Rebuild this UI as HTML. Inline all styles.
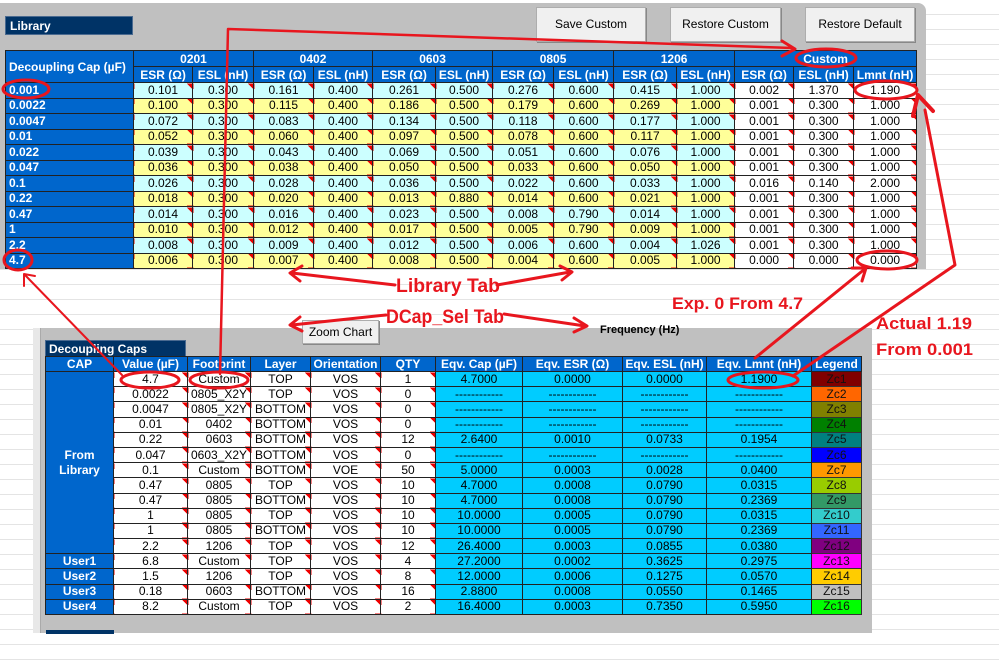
<!DOCTYPE html>
<html><head><meta charset="utf-8"><style>
*{margin:0;padding:0;box-sizing:border-box}
body{width:999px;height:661px;overflow:hidden;position:relative;background:#fff;font-family:"Liberation Sans",Arial,sans-serif;
background-image:repeating-linear-gradient(180deg,transparent 0,transparent 14px,#e4e4e4 14px,#e4e4e4 15px)}
.p{position:absolute}
.panel1{left:0;top:3px;width:926px;height:266px;background:#c0c0c0;border-top-right-radius:8px}
.panel2{left:40px;top:328px;width:832px;height:305px;background:#c0c0c0}
.lbl{background:#003366;color:#fff;font-weight:bold;font-size:12px;padding:2px 4px;border:1px solid #4a6a90}
.btn{background:#f0f0f0;border:1px solid #adadad;font-size:12px;text-align:center;line-height:33px;box-shadow:1px 1px 0 #888}
table{border-collapse:collapse;table-layout:fixed;font-size:12px}
td,th{border:1px solid #222;text-align:center;white-space:nowrap;overflow:hidden;padding:0}
th{background:#0066cc;color:#fff;font-weight:bold;font-size:12px}
.lib td{height:15.5px;line-height:13px}
.lib th{height:16px}
.rl{background:#0066cc!important;color:#fff;font-weight:bold;text-align:left!important;padding-left:3px!important;font-size:12px}
.c td{background-color:#ccffff}
.y td{background-color:#ffff99}
.lib td.w{background-color:#fff}
.lib td,.bt td.m{background-image:linear-gradient(225deg,#e00 4px,transparent 4px)}
.lib td.rl{background-image:none}
.bt td{height:15.2px;line-height:13px;background:#fff;font-size:12px}
.bt th{height:15px}
.bt td.q{background:#00ccff}
.bt td.cap{background:#0066cc;color:#fff;font-weight:bold}
.bt td.g{border:1px solid #333;color:#111}
</style></head><body>
<div class="p panel1"></div>
<div class="p lbl" style="left:5px;top:16px;width:128px;height:19px;">Library</div>
<div class="p btn" style="left:536px;top:7px;width:110px;height:35px;">Save Custom</div>
<div class="p btn" style="left:670px;top:7px;width:111px;height:35px;">Restore Custom</div>
<div class="p btn" style="left:805px;top:7px;width:110px;height:35px;">Restore Default</div>

<table class="p lib" style="left:5px;top:50px;width:911px">
<colgroup><col style="width:128px"><col style="width:59px"><col style="width:61px"><col style="width:60px"><col style="width:59px"><col style="width:63px"><col style="width:57px"><col style="width:61px"><col style="width:60px"><col style="width:63px"><col style="width:58px"><col style="width:59px"><col style="width:60px"><col style="width:63px"></colgroup>
<tr><th rowspan="2" style="text-align:left;padding-left:3px">Decoupling Cap (µF)</th><th colspan="2">0201</th><th colspan="2">0402</th><th colspan="2">0603</th><th colspan="2">0805</th><th colspan="2">1206</th><th colspan="3">Custom</th></tr>
<tr><th>ESR (Ω)</th><th>ESL (nH)</th><th>ESR (Ω)</th><th>ESL (nH)</th><th>ESR (Ω)</th><th>ESL (nH)</th><th>ESR (Ω)</th><th>ESL (nH)</th><th>ESR (Ω)</th><th>ESL (nH)</th><th>ESR (Ω)</th><th>ESL (nH)</th><th>Lmnt (nH)</th></tr>
<tr class="c"><td class="rl">0.001</td><td>0.101</td><td>0.300</td><td>0.161</td><td>0.400</td><td>0.261</td><td>0.500</td><td>0.276</td><td>0.600</td><td>0.415</td><td>1.000</td><td class="w">0.002</td><td class="w">1.370</td><td class="w">1.190</td></tr>
<tr class="y"><td class="rl">0.0022</td><td>0.100</td><td>0.300</td><td>0.115</td><td>0.400</td><td>0.186</td><td>0.500</td><td>0.179</td><td>0.600</td><td>0.269</td><td>1.000</td><td class="w">0.001</td><td class="w">0.300</td><td class="w">1.000</td></tr>
<tr class="c"><td class="rl">0.0047</td><td>0.072</td><td>0.300</td><td>0.083</td><td>0.400</td><td>0.134</td><td>0.500</td><td>0.118</td><td>0.600</td><td>0.177</td><td>1.000</td><td class="w">0.001</td><td class="w">0.300</td><td class="w">1.000</td></tr>
<tr class="y"><td class="rl">0.01</td><td>0.052</td><td>0.300</td><td>0.060</td><td>0.400</td><td>0.097</td><td>0.500</td><td>0.078</td><td>0.600</td><td>0.117</td><td>1.000</td><td class="w">0.001</td><td class="w">0.300</td><td class="w">1.000</td></tr>
<tr class="c"><td class="rl">0.022</td><td>0.039</td><td>0.300</td><td>0.043</td><td>0.400</td><td>0.069</td><td>0.500</td><td>0.051</td><td>0.600</td><td>0.076</td><td>1.000</td><td class="w">0.001</td><td class="w">0.300</td><td class="w">1.000</td></tr>
<tr class="y"><td class="rl">0.047</td><td>0.036</td><td>0.300</td><td>0.038</td><td>0.400</td><td>0.050</td><td>0.500</td><td>0.033</td><td>0.600</td><td>0.050</td><td>1.000</td><td class="w">0.001</td><td class="w">0.300</td><td class="w">1.000</td></tr>
<tr class="c"><td class="rl">0.1</td><td>0.026</td><td>0.300</td><td>0.028</td><td>0.400</td><td>0.036</td><td>0.500</td><td>0.022</td><td>0.600</td><td>0.033</td><td>1.000</td><td class="w">0.016</td><td class="w">0.140</td><td class="w">2.000</td></tr>
<tr class="y"><td class="rl">0.22</td><td>0.018</td><td>0.300</td><td>0.020</td><td>0.400</td><td>0.013</td><td>0.880</td><td>0.014</td><td>0.600</td><td>0.021</td><td>1.000</td><td class="w">0.001</td><td class="w">0.300</td><td class="w">1.000</td></tr>
<tr class="c"><td class="rl">0.47</td><td>0.014</td><td>0.300</td><td>0.016</td><td>0.400</td><td>0.023</td><td>0.500</td><td>0.008</td><td>0.790</td><td>0.014</td><td>1.000</td><td class="w">0.001</td><td class="w">0.300</td><td class="w">1.000</td></tr>
<tr class="y"><td class="rl">1</td><td>0.010</td><td>0.300</td><td>0.012</td><td>0.400</td><td>0.017</td><td>0.500</td><td>0.005</td><td>0.790</td><td>0.009</td><td>1.000</td><td class="w">0.001</td><td class="w">0.300</td><td class="w">1.000</td></tr>
<tr class="c"><td class="rl">2.2</td><td>0.008</td><td>0.300</td><td>0.009</td><td>0.400</td><td>0.012</td><td>0.500</td><td>0.006</td><td>0.600</td><td>0.004</td><td>1.026</td><td class="w">0.001</td><td class="w">0.300</td><td class="w">1.000</td></tr>
<tr class="y"><td class="rl">4.7</td><td>0.006</td><td>0.300</td><td>0.007</td><td>0.400</td><td>0.008</td><td>0.500</td><td>0.004</td><td>0.600</td><td>0.005</td><td>1.000</td><td class="w">0.000</td><td class="w">0.000</td><td class="w">0.000</td></tr>
</table>

<div class="p panel2"></div>
<div class="p" style="left:33px;top:328px;width:8px;height:305px;background:#e8e8e8;border-right:1px solid #aaa"></div>
<div class="p btn" style="left:302px;top:320px;width:77px;height:24px;line-height:22px;">Zoom Chart</div>
<div class="p" style="left:600px;top:324px;font-size:11px;font-weight:bold">Frequency (Hz)</div>
<div class="p lbl" style="left:45px;top:340px;width:141px;height:17px;padding:1px 3px">Decoupling Caps</div>
<div class="p" style="left:46px;top:630px;width:68px;height:4px;background:#003366"></div>

<table class="p bt" style="left:45px;top:356px;width:816px">
<colgroup><col style="width:68px"><col style="width:74px"><col style="width:63px"><col style="width:60px"><col style="width:70px"><col style="width:55px"><col style="width:87px"><col style="width:100px"><col style="width:84px"><col style="width:105px"><col style="width:50px"></colgroup>
<tr><th>CAP</th><th>Value (µF)</th><th>Footprint</th><th>Layer</th><th>Orientation</th><th>QTY</th><th>Eqv. Cap (µF)</th><th>Eqv. ESR (Ω)</th><th>Eqv. ESL (nH)</th><th>Eqv. Lmnt (nH)</th><th>Legend</th></tr>
<tr><td class="cap" rowspan="12" style="white-space:normal;line-height:15px">From<br>Library</td><td class="m">4.7</td><td class="m">Custom</td><td class="m">TOP</td><td class="m">VOS</td><td class="m">1</td><td class="q">4.7000</td><td class="q">0.0000</td><td class="q">0.0000</td><td class="q">1.1900</td><td class="g" style="background:#800000">Zc1</td></tr>
<tr><td class="m">0.0022</td><td class="m">0805_X2Y</td><td class="m">TOP</td><td class="m">VOS</td><td class="m">0</td><td class="q">------------</td><td class="q">------------</td><td class="q">------------</td><td class="q">------------</td><td class="g" style="background:#ff6600">Zc2</td></tr>
<tr><td class="m">0.0047</td><td class="m">0805_X2Y</td><td class="m">BOTTOM</td><td class="m">VOS</td><td class="m">0</td><td class="q">------------</td><td class="q">------------</td><td class="q">------------</td><td class="q">------------</td><td class="g" style="background:#808000">Zc3</td></tr>
<tr><td class="m">0.01</td><td class="m">0402</td><td class="m">BOTTOM</td><td class="m">VOS</td><td class="m">0</td><td class="q">------------</td><td class="q">------------</td><td class="q">------------</td><td class="q">------------</td><td class="g" style="background:#008000">Zc4</td></tr>
<tr><td class="m">0.22</td><td class="m">0603</td><td class="m">BOTTOM</td><td class="m">VOS</td><td class="m">12</td><td class="q">2.6400</td><td class="q">0.0010</td><td class="q">0.0733</td><td class="q">0.1954</td><td class="g" style="background:#008080">Zc5</td></tr>
<tr><td class="m">0.047</td><td class="m">0603_X2Y</td><td class="m">BOTTOM</td><td class="m">VOS</td><td class="m">0</td><td class="q">------------</td><td class="q">------------</td><td class="q">------------</td><td class="q">------------</td><td class="g" style="background:#0000ff">Zc6</td></tr>
<tr><td class="m">0.1</td><td class="m">Custom</td><td class="m">BOTTOM</td><td class="m">VOE</td><td class="m">50</td><td class="q">5.0000</td><td class="q">0.0003</td><td class="q">0.0028</td><td class="q">0.0400</td><td class="g" style="background:#ff9900">Zc7</td></tr>
<tr><td class="m">0.47</td><td class="m">0805</td><td class="m">TOP</td><td class="m">VOS</td><td class="m">10</td><td class="q">4.7000</td><td class="q">0.0008</td><td class="q">0.0790</td><td class="q">0.0315</td><td class="g" style="background:#99cc00">Zc8</td></tr>
<tr><td class="m">0.47</td><td class="m">0805</td><td class="m">BOTTOM</td><td class="m">VOS</td><td class="m">10</td><td class="q">4.7000</td><td class="q">0.0008</td><td class="q">0.0790</td><td class="q">0.2369</td><td class="g" style="background:#339966">Zc9</td></tr>
<tr><td class="m">1</td><td class="m">0805</td><td class="m">TOP</td><td class="m">VOS</td><td class="m">10</td><td class="q">10.0000</td><td class="q">0.0005</td><td class="q">0.0790</td><td class="q">0.0315</td><td class="g" style="background:#33cccc">Zc10</td></tr>
<tr><td class="m">1</td><td class="m">0805</td><td class="m">BOTTOM</td><td class="m">VOS</td><td class="m">10</td><td class="q">10.0000</td><td class="q">0.0005</td><td class="q">0.0790</td><td class="q">0.2369</td><td class="g" style="background:#3366ff">Zc11</td></tr>
<tr><td class="m">2.2</td><td class="m">1206</td><td class="m">TOP</td><td class="m">VOS</td><td class="m">12</td><td class="q">26.4000</td><td class="q">0.0003</td><td class="q">0.0855</td><td class="q">0.0380</td><td class="g" style="background:#800080">Zc12</td></tr>
<tr><td class="cap">User1</td><td class="m">6.8</td><td class="m">Custom</td><td class="m">TOP</td><td class="m">VOS</td><td class="m">4</td><td class="q">27.2000</td><td class="q">0.0002</td><td class="q">0.3625</td><td class="q">0.2975</td><td class="g" style="background:#ff00ff">Zc13</td></tr>
<tr><td class="cap">User2</td><td class="m">1.5</td><td class="m">1206</td><td class="m">TOP</td><td class="m">VOS</td><td class="m">8</td><td class="q">12.0000</td><td class="q">0.0006</td><td class="q">0.1275</td><td class="q">0.0570</td><td class="g" style="background:#ffcc00">Zc14</td></tr>
<tr><td class="cap">User3</td><td class="m">0.18</td><td class="m">0603</td><td class="m">BOTTOM</td><td class="m">VOS</td><td class="m">16</td><td class="q">2.8800</td><td class="q">0.0008</td><td class="q">0.0550</td><td class="q">0.1465</td><td class="g" style="background:#c0c0c0">Zc15</td></tr>
<tr><td class="cap">User4</td><td class="m">8.2</td><td class="m">Custom</td><td class="m">TOP</td><td class="m">VOS</td><td class="m">2</td><td class="q">16.4000</td><td class="q">0.0003</td><td class="q">0.7350</td><td class="q">0.5950</td><td class="g" style="background:#00ff00">Zc16</td></tr>
</table>

<svg class="p" style="left:0;top:0" width="999" height="661" viewBox="0 0 999 661">
<g fill="none" stroke="#e8161e" stroke-width="3" stroke-linecap="round" stroke-linejoin="round">
<ellipse cx="26" cy="89" rx="23" ry="9"/>
<ellipse cx="826" cy="58" rx="30" ry="9"/>
<ellipse cx="886" cy="90" rx="31" ry="9"/>
<ellipse cx="18" cy="260" rx="14" ry="10"/>
<ellipse cx="887" cy="260" rx="30" ry="9"/>
<ellipse cx="150" cy="380" rx="29" ry="8"/>
<ellipse cx="219" cy="380" rx="29" ry="8"/>
<ellipse cx="763" cy="380" rx="35" ry="8"/>
<path d="M220 374 L228 29 L793 48" stroke-width="2.5"/>
<path d="M782 41 L795 49 L782 56"/>
<path d="M122 375 L25 275" stroke-width="2"/>
<path d="M24 286 L24 274 L35 276" stroke-width="2"/>
<path d="M755 358 L866 268"/>
<path d="M852 268 L866 268 L862 281"/>
<path d="M793 376 L955 265 L925 110"/>
<path d="M913 116 L918 95 L933 111" stroke-width="4"/>
<path d="M395 285 L292 273 M302 266 L290 273 L300 281"/>
<path d="M497 285 L570 272 M560 266 L572 272 L562 280"/>
<path d="M386 315 L292 325 M300 317 L290 325 L302 331"/>
<path d="M504 314 L585 326 M574 318 L587 326 L574 332"/>
</g>
<g fill="#e8161e" font-family="Liberation Sans, Arial, sans-serif" font-weight="bold">
<text x="396" y="292" font-size="19" textLength="104" lengthAdjust="spacingAndGlyphs">Library Tab</text>
<text x="386" y="323" font-size="19" textLength="118" lengthAdjust="spacingAndGlyphs">DCap_Sel Tab</text>
<text x="672" y="309" font-size="17" textLength="131" lengthAdjust="spacingAndGlyphs">Exp. 0 From 4.7</text>
<text x="876" y="329" font-size="17" textLength="96" lengthAdjust="spacingAndGlyphs">Actual 1.19</text>
<text x="876" y="355" font-size="17" textLength="97" lengthAdjust="spacingAndGlyphs">From 0.001</text>
</g>
</svg>
</body></html>
